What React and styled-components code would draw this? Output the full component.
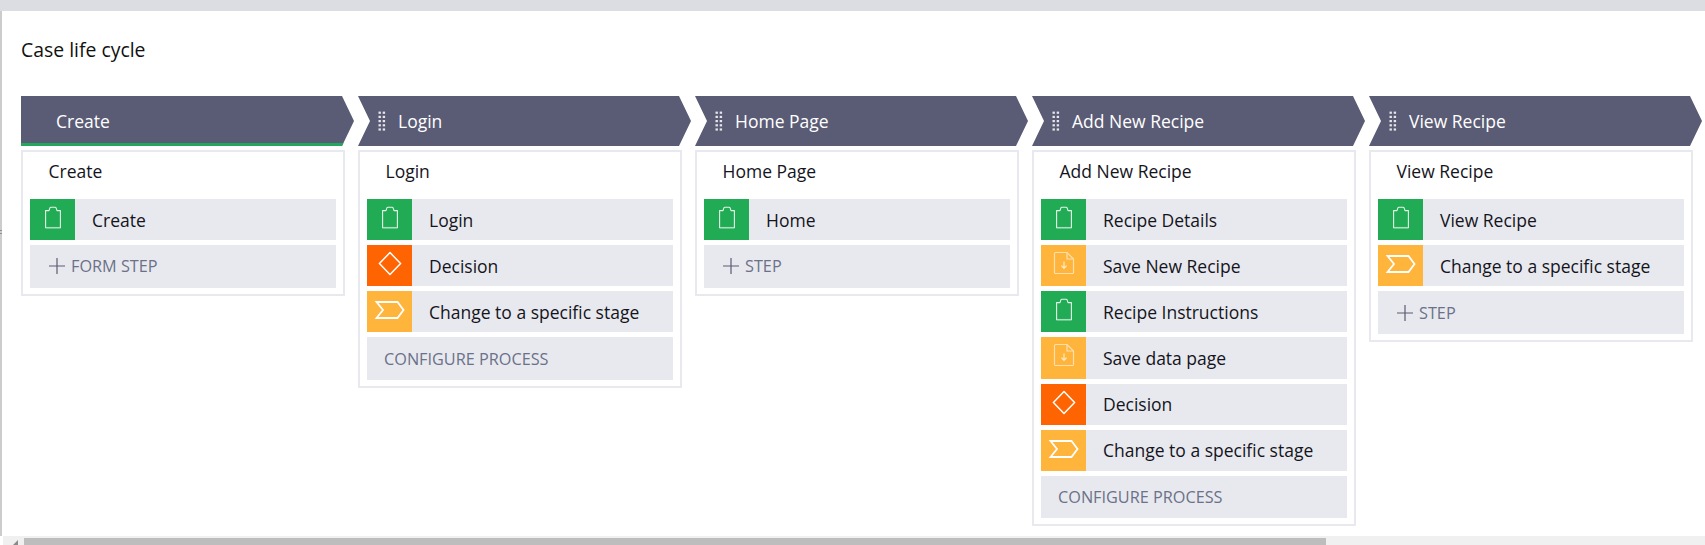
import React from "react";
import styled, { createGlobalStyle } from "styled-components";

const Global = createGlobalStyle`
  html, body { margin: 0; padding: 0; background: #fff; overflow: hidden; }
  * { box-sizing: border-box; }
`;

const Page = styled.div`
  width: 1705px;
  height: 545px;
  display: flex;
  flex-direction: column;
  overflow: hidden;
  font-family: "Open Sans", "Liberation Sans", sans-serif;
  font-size: 17.5px;
  color: #14141c;
  background: #fff;
`;
const TopBar = styled.div`
  height: 11px;
  flex: none;
  background: #dcdde2;
`;
const Main = styled.div`
  flex: 1;
  min-height: 0;
  position: relative;
  border-left: 2px solid #cccccc;
  padding: 27px 0 0 19px;
`;
const Grip = styled.div`
  position: absolute;
  left: -2px;
  top: 219px;
  width: 2px;
  height: 6px;
  background: repeating-linear-gradient(#8f8f8f 0 1px, #cccccc 1px 3px);
`;
const Title = styled.h1`
  margin: 0 0 27px;
  font-size: 19.4px;
  font-weight: 400;
  line-height: 24px;
  height: 31px;
  color: #111;
`;
const Board = styled.div`
  display: flex;
  align-items: flex-start;
  gap: 4px;
`;
const Stage = styled.section`
  flex: none;
  width: 333px;
`;
const Header = styled.div`
  height: 50px;
  display: flex;
  align-items: center;
  gap: 12px;
  padding-left: ${(p) => (p.$first ? "35px" : "20px")};
  padding-bottom: 1px;
  background: #5a5b74;
  color: #fff;
  margin-bottom: 4px;
  clip-path: ${(p) =>
    p.$first
      ? "polygon(0 0, 321px 0, 333px 50%, 321px 100%, 0 100%)"
      : "polygon(0 0, 321px 0, 333px 50%, 321px 100%, 0 100%, 12px 50%)"};
  ${(p) => p.$first && "box-shadow: inset 0 -3px 0 #21a85b;"}
`;
const Card = styled.div`
  width: 324px;
  border: 2px solid #e8e9ee;
  padding: 0 7px 6px;
  background: #fff;
`;
const CardTitle = styled.div`
  height: 47px;
  padding: 0 0 10px 18.5px;
  display: flex;
  align-items: center;
`;
const Steps = styled.div`
  display: flex;
  flex-direction: column;
  gap: 5px;
`;
const Row = styled.div`
  height: 41.15px;
  display: flex;
  align-items: center;
  background: #e8e9ee;
`;
const IconBox = styled.div`
  flex: none;
  width: 45px;
  height: 100%;
  display: flex;
  align-items: flex-start;
  justify-content: center;
  background: ${(p) => p.$color};
  svg { display: block; margin-top: ${(p) => p.$top}px; }
`;
const RowLabel = styled.span`
  padding-left: 17px;
  white-space: nowrap;
`;
const Footer = styled.div`
  height: 42.5px;
  display: flex;
  align-items: center;
  gap: 6px;
  padding-left: ${(p) => (p.$plus ? "19px" : "17px")};
  background: #e8e9ee;
  color: #6b7189;
  font-size: 16.25px;
  white-space: nowrap;
`;
const ScrollTrack = styled.div`
  height: 9px;
  flex: none;
  margin-left: 3px;
  padding: 2px 0 0 21px;
  background: #f0f0f0;
  position: relative;
`;
const ScrollThumb = styled.div`
  width: 1302px;
  height: 7px;
  background: #bdbdbd;
`;
const ScrollArrow = styled.svg`
  position: absolute;
  left: 10px;
  top: 4px;
`;

const ClipIcon = () => (
  <svg width="18" height="23" viewBox="0 0 18 23" fill="none">
    <path d="M1.6 4.6H5L5.8 2.2C6 1.5 6.4 1.2 7 1.2H11C11.6 1.2 12 1.5 12.2 2.2L13 4.6H16.4V21.8H1.6Z" stroke="#e4f7ea" strokeWidth="1.1" strokeLinejoin="round" />
    <path d="M2 21.6H16" stroke="#a9e0bd" strokeWidth="1.3" />
  </svg>
);
const DiamondIcon = () => (
  <svg width="24" height="25" viewBox="0 0 24 25" fill="none">
    <path d="M12 1.6L22.6 12.5L12 23.4L1.4 12.5Z" stroke="#fff" strokeWidth="1.5" strokeLinejoin="round" />
  </svg>
);
const ChevronIcon = () => (
  <svg width="32" height="20" viewBox="0 0 32 20" fill="none">
    <path d="M2.5 2H23.5L29.5 10L23.5 18H2.5L9 10Z" stroke="#fff" strokeWidth="1.8" strokeLinejoin="miter" />
  </svg>
);
const FileIcon = () => (
  <svg width="22" height="24" viewBox="0 0 22 24" fill="none">
    <path d="M14 1.5H2.6C2 1.5 1.5 2 1.5 2.6V21.4C1.5 22 2 22.5 2.6 22.5H19.4C20 22.5 20.5 22 20.5 21.4V8L14 1.5Z" stroke="#ffe0ac" strokeWidth="1.2" />
    <path d="M14 1.5V8H20.5" stroke="#ffe0ac" strokeWidth="1.2" />
    <path d="M11 10.5V17M8.4 14.6L11 17.4L13.6 14.6" stroke="#ffe9c6" strokeWidth="1.2" />
  </svg>
);
const PlusIcon = () => (
  <svg width="16" height="16" viewBox="0 0 16 16" fill="none" style={{ flex: "none" }}>
    <path d="M8 0V16M0 8H16" stroke="#5a5b74" strokeWidth="1.2" />
  </svg>
);
const DragHandle = () => (
  <svg width="8" height="20" viewBox="0 0 8 20" fill="#fff" style={{ flex: "none" }}>
    {[0, 1, 2, 3, 4].map((r) =>
      [0.5, 4.7].map((c) => (
        <rect key={`${r}-${c}`} x={c} y={0.6 + r * 4.2} width="2.4" height="2.2" opacity="0.85" />
      ))
    )}
  </svg>
);

const KINDS = {
  form: { color: "#20ab54", top: 7, Icon: ClipIcon },
  decision: { color: "#ff6402", top: 6, Icon: DiamondIcon },
  change: { color: "#ffb43c", top: 9, Icon: ChevronIcon },
  save: { color: "#ffb43c", top: 6, Icon: FileIcon },
};

const STAGES = [
  {
    name: "Create",
    first: true,
    steps: [["form", "Create"]],
    footer: "FORM STEP",
    plus: true,
  },
  {
    name: "Login",
    steps: [
      ["form", "Login"],
      ["decision", "Decision"],
      ["change", "Change to a specific stage"],
    ],
    footer: "CONFIGURE PROCESS",
  },
  {
    name: "Home Page",
    steps: [["form", "Home"]],
    footer: "STEP",
    plus: true,
  },
  {
    name: "Add New Recipe",
    steps: [
      ["form", "Recipe Details"],
      ["save", "Save New Recipe"],
      ["form", "Recipe Instructions"],
      ["save", "Save data page"],
      ["decision", "Decision"],
      ["change", "Change to a specific stage"],
    ],
    footer: "CONFIGURE PROCESS",
  },
  {
    name: "View Recipe",
    steps: [
      ["form", "View Recipe"],
      ["change", "Change to a specific stage"],
    ],
    footer: "STEP",
    plus: true,
  },
];

export default function App() {
  return (
    <Page>
      <Global />
      <TopBar />
      <Main>
        <Grip />
        <Title>Case life cycle</Title>
        <Board>
          {STAGES.map((stage) => (
            <Stage key={stage.name}>
              <Header $first={stage.first}>
                {!stage.first && <DragHandle />}
                <span>{stage.name}</span>
              </Header>
              <Card>
                <CardTitle>{stage.name}</CardTitle>
                <Steps>
                  {stage.steps.map(([kind, label], i) => {
                    const { color, top, Icon } = KINDS[kind];
                    return (
                      <Row key={i}>
                        <IconBox $color={color} $top={top}>
                          <Icon />
                        </IconBox>
                        <RowLabel>{label}</RowLabel>
                      </Row>
                    );
                  })}
                  <Footer $plus={stage.plus}>
                    {stage.plus && <PlusIcon />}
                    <span>{stage.footer}</span>
                  </Footer>
                </Steps>
              </Card>
            </Stage>
          ))}
        </Board>
      </Main>
      <ScrollTrack>
        <ScrollArrow width="6" height="5" viewBox="0 0 6 5">
          <path d="M5 0V5H0Z" fill="#8a8a8a" />
        </ScrollArrow>
        <ScrollThumb />
      </ScrollTrack>
    </Page>
  );
}
